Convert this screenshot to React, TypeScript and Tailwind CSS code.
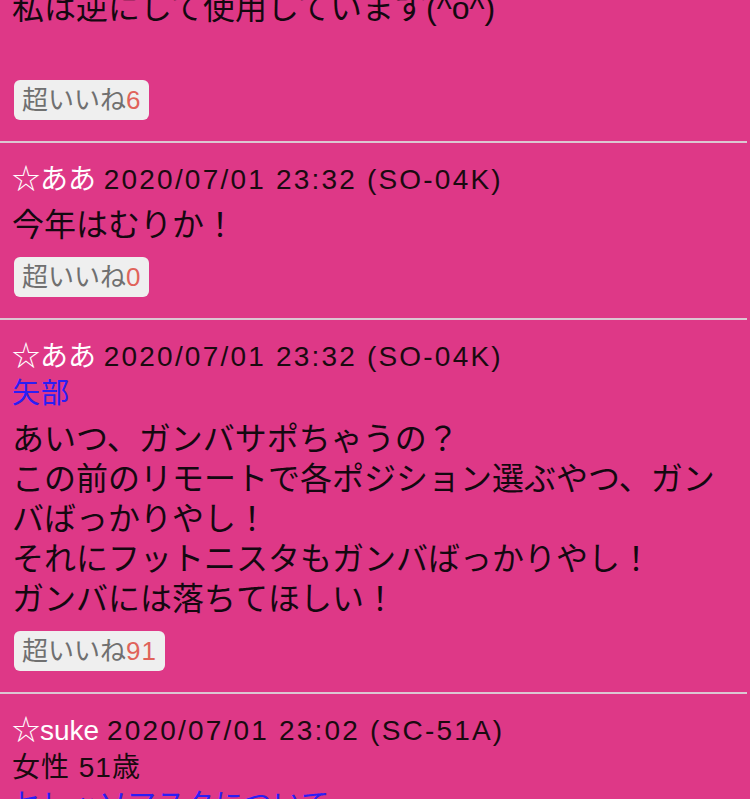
const font = { fontFamily: '"Liberation Sans", "Noto Sans CJK JP", sans-serif' };

type Post = {
  name?: string;
  date?: string;
  device?: string;
  sub?: { text: string; blue?: boolean }[];
  body: string[];
  likes?: number;
};

const posts: Post[] = [
  { body: ["私は逆にして使用しています(^o^)", "\u00a0"], likes: 6 },
  {
    name: "☆ああ",
    date: "2020/07/01 23:32",
    device: "(SO-04K)",
    body: ["今年はむりか！"],
    likes: 0,
  },
  {
    name: "☆ああ",
    date: "2020/07/01 23:32",
    device: "(SO-04K)",
    sub: [{ text: "矢部", blue: true }],
    body: [
      "あいつ、ガンバサポちゃうの？",
      "この前のリモートで各ポジション選ぶやつ、ガンバばっかりやし！",
      "それにフットニスタもガンバばっかりやし！",
      "ガンバには落ちてほしい！",
    ],
    likes: 91,
  },
  {
    name: "☆suke",
    date: "2020/07/01 23:02",
    device: "(SC-51A)",
    sub: [{ text: "女性 51歳" }, { text: "セレッソマスタについて", blue: true }],
    body: [],
  },
];

const LikeButton = ({ count }: { count: number }) => (
  <div className="mt-3 ml-[2px] inline-flex h-10 items-center rounded-[6px] bg-[#efefef] px-[8px] text-[26px] leading-none text-[#707070]">
    超いいね<span className="tracking-[1px] text-[#e0635a]">{count}</span>
  </div>
);

const PostItem = ({ post, first }: { post: Post; first?: boolean }) => (
  <div className={first ? "pb-[21px] pl-3" : "border-t-2 border-[#dcc6d2] pt-[19px] pb-[21px] pl-3"}>
    {post.name && (
      <div className="text-[28px] leading-[36px] text-[#1a0a10]">
        <span className="text-white">{post.name}</span>{" "}
        <span className="tracking-[2.2px]">
          {post.date} {post.device}
        </span>
      </div>
    )}
    {post.sub?.map((s, i) => (
      <div
        key={i}
        className={`text-[28px] leading-[37px] tracking-[1px] ${s.blue ? "text-[#2a1ef5]" : "text-[#1a0a10]"}`}
      >
        {s.text}
      </div>
    ))}
    {post.body.length > 0 && (
      <div className={`${post.name ? "mt-[7px]" : ""} pr-3 text-[32px] leading-[40px] text-[#140810]`}>
        {post.body.map((l, i) => (
          <div key={i}>{l}</div>
        ))}
      </div>
    )}
    {post.likes !== undefined && <LikeButton count={post.likes} />}
  </div>
);

export default function App() {
  return (
    <div className="h-[799px] overflow-hidden bg-[#de3887]" style={font}>
      <div className="-mt-[12px] mr-[3px]">
        {posts.map((p, i) => (
          <PostItem key={i} post={p} first={i === 0} />
        ))}
      </div>
    </div>
  );
}
